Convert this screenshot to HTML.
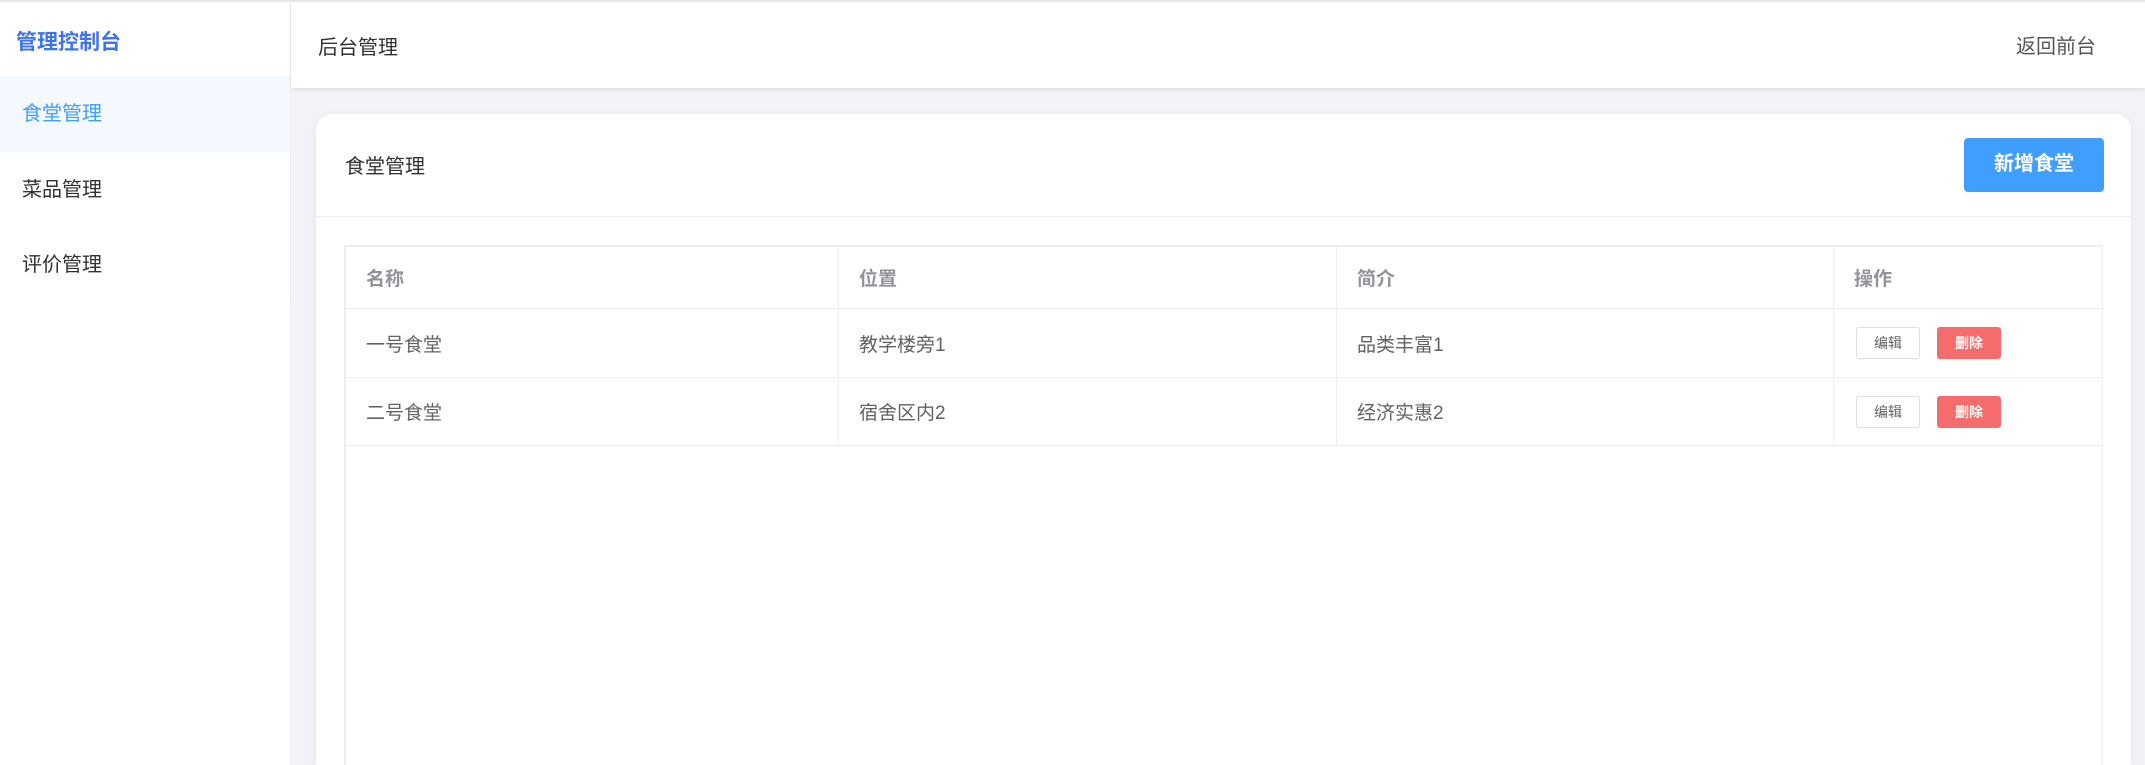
<!DOCTYPE html>
<html><head><meta charset="utf-8"><style>
*{margin:0;padding:0;box-sizing:border-box}
html,body{width:2145px;height:765px;overflow:hidden}
body{background:#f2f3f7;font-family:"Liberation Sans","Noto Sans CJK SC",sans-serif;position:relative}
.top{position:absolute;left:0;top:0;width:2145px;height:2px;background:#e4e6ea}
.side{position:absolute;left:0;top:2px;width:290px;height:763px;background:#fff}
.sideline{position:absolute;left:290px;top:2px;width:1px;height:300px;background:#eceef2}
.brand{position:absolute;left:16px;top:24px;font-size:21px;font-weight:bold;color:#3b73f0}
.mi{position:absolute;left:0;width:290px;height:76px;line-height:76px;padding-left:22px;font-size:20px;color:#303133}
.mi.act{background:#f4f8ff;color:#409eff}
.head{position:absolute;left:291px;top:2px;width:1854px;height:86px;background:#fff;box-shadow:0 2px 4px rgba(0,0,0,0.08)}
.head .t{position:absolute;left:27px;top:29px;font-size:20px;color:#303133}
.head .r{position:absolute;left:1725px;top:28px;font-size:20px;color:#555}
.card{position:absolute;left:316px;top:114px;width:1815px;height:700px;background:#fff;border-radius:16px;box-shadow:0 2px 10px rgba(0,0,0,0.06)}
.ch{position:absolute;left:0;top:0;width:100%;height:103px;border-bottom:1px solid #ebeef5}
.ch .t{position:absolute;left:29px;top:36px;font-size:20px;color:#303133}
.btn{position:absolute;left:1648px;top:24px;width:140px;height:54px;background:#409eff;border-radius:4px;color:#fff;font-weight:bold;font-size:20px;text-align:center;line-height:52px}
.tbl{position:absolute;left:344px;top:245px;width:1759px;height:540px;border:2px solid #ebeef5;border-right:1px solid #ebeef5;background:#fff}
.row{position:absolute;left:0;width:100%;border-bottom:1px solid #ebeef5}
.cell{position:absolute;top:0;height:100%;border-right:1px solid #ebeef5;padding-left:20px;display:flex;align-items:center;font-size:19px;color:#606266}
.hd .cell{color:#909399;font-weight:bold}
.c1{left:0;width:493px}.c2{left:493px;width:498px}.c3{left:991px;width:497px}.c4{left:1488px;width:270px;border-right:none}
.e{display:inline-block;width:64px;height:32px;border:1px solid #dcdfe6;border-radius:3px;font-size:14px;line-height:30px;text-align:center;color:#606266;margin-left:2px}
.d{display:inline-block;width:64px;height:32px;background:#f56c6c;border-radius:3px;font-size:14px;line-height:32px;text-align:center;color:#fff;margin-left:17px;font-weight:bold}
</style></head><body>
<div class="top"></div>
<div class="side">
<div class="brand">管理控制台</div>
<div class="mi act" style="top:74px">食堂管理</div>
<div class="mi" style="top:150px">菜品管理</div>
<div class="mi" style="top:225px">评价管理</div>
</div>
<div class="sideline"></div>
<div class="head"><div class="t">后台管理</div><div class="r">返回前台</div></div>
<div class="card" style="height:651px;border-radius:16px 16px 0 0">
<div class="ch"><div class="t">食堂管理</div><div class="btn">新增食堂</div></div>
</div>
<div class="tbl">
<div class="row hd" style="top:0;height:62px"><div class="cell c1">名称</div><div class="cell c2">位置</div><div class="cell c3">简介</div><div class="cell c4">操作</div></div>
<div class="row" style="top:62px;height:69px"><div class="cell c1">一号食堂</div><div class="cell c2">教学楼旁1</div><div class="cell c3">品类丰富1</div><div class="cell c4"><span class="e">编辑</span><span class="d">删除</span></div></div>
<div class="row" style="top:131px;height:68px"><div class="cell c1">二号食堂</div><div class="cell c2">宿舍区内2</div><div class="cell c3">经济实惠2</div><div class="cell c4"><span class="e">编辑</span><span class="d">删除</span></div></div>
</div>
</body></html>
